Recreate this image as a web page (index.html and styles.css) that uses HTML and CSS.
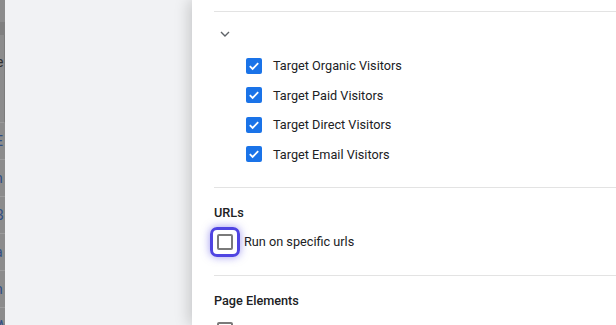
FILE: index.html
```html
<!DOCTYPE html>
<html lang="en">

<head>
    <meta charset="UTF-8">
    <meta name="viewport" content="width=device-width, initial-scale=1.0">
    <title>Targeting</title>

    <link rel="stylesheet" href="styles.css">
</head>

<body>
    <div class="backdrop">
        <div class="bd-head"></div>
        <div class="bd-card"><span>e</span></div>
        <div class="bd-row"><span>E</span></div>
        <div class="bd-row"><span>n</span></div>
        <div class="bd-row"><span>B</span></div>
        <div class="bd-row"><span>a</span></div>
        <div class="bd-row"><span>n</span></div>
        <div class="bd-row"><span>W</span></div>
    </div>

    <div class="sidebar"></div>

    <div class="drawer">
        <div class="section top">
            <div class="toggle">
                <svg width="18" height="18" viewBox="0 0 18 18">
                    <path d="M5 7 L9 11 L13 7" fill="none" stroke="#5f6368" stroke-width="1.4" />
                </svg>
            </div>

            <div class="options">
                <label class="option">
                    <span class="box checked">
                        <svg width="16" height="16" viewBox="0 0 16 16">
                            <path d="M3.8 8.2 L6.6 11 L12.2 5.2" fill="none" stroke="#fff" stroke-width="1.8" />
                        </svg>
                    </span>
                    Target Organic Visitors
                </label>
                <label class="option">
                    <span class="box checked">
                        <svg width="16" height="16" viewBox="0 0 16 16">
                            <path d="M3.8 8.2 L6.6 11 L12.2 5.2" fill="none" stroke="#fff" stroke-width="1.8" />
                        </svg>
                    </span>
                    Target Paid Visitors
                </label>
                <label class="option">
                    <span class="box checked">
                        <svg width="16" height="16" viewBox="0 0 16 16">
                            <path d="M3.8 8.2 L6.6 11 L12.2 5.2" fill="none" stroke="#fff" stroke-width="1.8" />
                        </svg>
                    </span>
                    Target Direct Visitors
                </label>
                <label class="option">
                    <span class="box checked">
                        <svg width="16" height="16" viewBox="0 0 16 16">
                            <path d="M3.8 8.2 L6.6 11 L12.2 5.2" fill="none" stroke="#fff" stroke-width="1.8" />
                        </svg>
                    </span>
                    Target Email Visitors
                </label>
            </div>
        </div>

        <div class="section">
            <div class="title">URLs</div>
            <label class="option plain">
                <span class="box focused"></span>
                Run on specific urls
            </label>
        </div>

        <div class="section">
            <div class="title">Page Elements</div>
            <label class="option plain last">
                <span class="box"></span>
                Run on specific elements
            </label>
        </div>
    </div>
</body>

</html>
```

FILE: styles.css
```css
body {
    margin: 0;
    height: 325px;
    display: flex;
    overflow: hidden;
    font-family: Roboto, "Noto Sans", sans-serif;
    font-size: 12.7px;
    color: #202124;
}

/* dimmed page behind the drawer */
.backdrop {
    width: 5px;
    flex-shrink: 0;
    background-color: #8c8c8c;
    overflow: hidden;
    display: flex;
    flex-direction: column;
    color: #2f4e86;
    font-size: 14px;
}

.backdrop div {
    flex-shrink: 0;
}

.bd-head {
    height: 22px;
    border-bottom: 13px solid #808080;
}

.bd-card {
    height: 87px;
    border-right: 1px solid #7c7c7c;
    border-bottom: 1px solid #9a9a9a;
    color: #303030;
}

.bd-card span {
    display: block;
    margin-top: 19px;
    margin-left: -4px;
}

.bd-row {
    height: 36px;
    border-bottom: 1px solid #9c9c9c;
    display: flex;
    align-items: center;
}

.bd-row span {
    margin-left: -5px;
}

/* grey side panel */
.sidebar {
    width: 187px;
    flex-shrink: 0;
    background-color: #f1f2f4;
}

/* white drawer */
.drawer {
    flex: 1;
    background-color: #fff;
    box-shadow: -3px 0 14px rgba(0, 0, 0, 0.18);
    padding-left: 22px;
    padding-top: 11px;
}

.section {
    border-top: 1px solid #e3e3e3;
    padding-top: 17px;
    padding-bottom: 18px;
}

.section.top {
    padding-top: 13px;
    padding-bottom: 18px;
}

.toggle {
    height: 18px;
    margin-left: 2px;
}

.toggle svg {
    display: block;
}

.options {
    margin-top: 8px;
    padding-left: 32px;
}

.option {
    display: flex;
    align-items: center;
    gap: 11px;
    height: 29.5px;
}

.option.plain {
    margin-top: 7px;
    margin-left: 3px;
}

.option.last {
    margin-top: 8px;
}

.title {
    font-weight: 500;
    line-height: 15px;
}

.box {
    width: 16px;
    height: 16px;
    flex-shrink: 0;
    box-sizing: border-box;
    border: 2px solid #7a7a7a;
    border-radius: 2px;
    position: relative;
}

.box.checked {
    border: none;
    background-color: #1a73e8;
}

.box svg {
    display: block;
}

/* keyboard focus ring */
.box.focused::after {
    content: "";
    position: absolute;
    top: -9px;
    left: -9px;
    right: -9px;
    bottom: -9px;
    border: 3px solid #5045e2;
    border-radius: 7px;
    box-shadow: 0 0 8px rgba(80, 69, 226, 0.55);
}
```
